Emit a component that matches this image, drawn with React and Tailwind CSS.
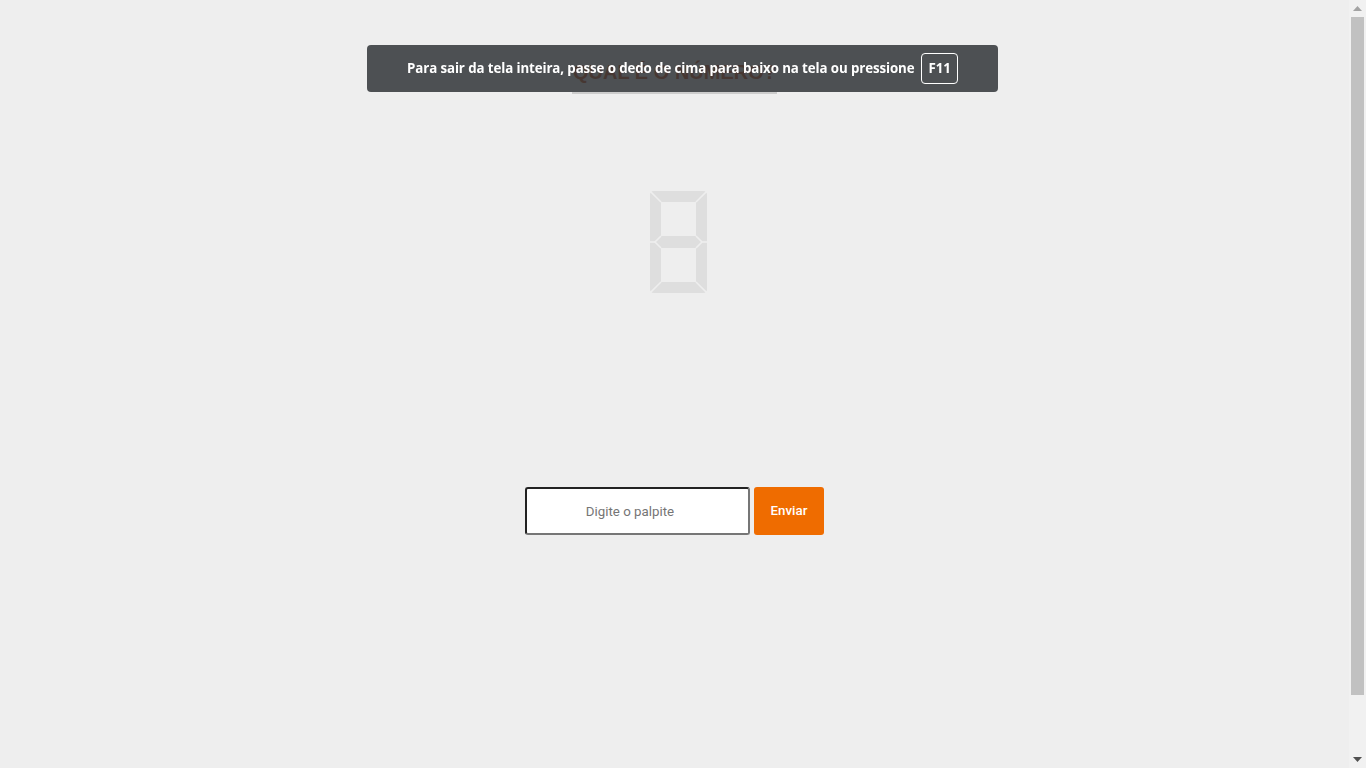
import React from 'react';

function Digit() {
        const bg = '#eeeeee';
        return (
                <svg width="57" height="102" viewBox="0 0 57 102" className="block">
                        <rect x="0" y="0" width="57" height="102" rx="4" fill="#dedede" />
                        <rect x="11" y="11" width="35" height="34" fill={bg} />
                        <rect x="11" y="57" width="35" height="34" fill={bg} />
                        <g stroke={bg} strokeWidth="1.6" fill="none">
                                <line x1="0.5" y1="0.5" x2="11" y2="11" />
                                <line x1="56.5" y1="0.5" x2="46" y2="11" />
                                <line x1="0.5" y1="101.5" x2="11" y2="91" />
                                <line x1="56.5" y1="101.5" x2="46" y2="91" />
                                <polyline points="11,45 5,51 11,57" />
                                <polyline points="46,45 52,51 46,57" />
                                <line x1="0" y1="51" x2="5" y2="51" />
                                <line x1="52" y1="51" x2="57" y2="51" />
                        </g>
                </svg>
        );
}

function Scrollbar() {
        return (
                <div className="w-[17px] h-full bg-[#f1f1f1] flex flex-col items-center">
                        <div className="h-[17px] flex items-center justify-center">
                                <svg width="9" height="5" viewBox="0 0 9 5"><path d="M0 5 L4.5 0 L9 5 Z" fill="#a3a3a3" /></svg>
                        </div>
                        <div className="w-[13px] h-[678px] bg-[#c1c1c1]" />
                        <div className="flex-1" />
                        <div className="h-[17px] flex items-center justify-center">
                                <svg width="9" height="5" viewBox="0 0 9 5"><path d="M0 0 L9 0 L4.5 5 Z" fill="#505050" /></svg>
                        </div>
                </div>
        );
}

export default function App() {
        return (
                <div className="h-screen overflow-hidden bg-[#eeeeee] flex" style={{ fontFamily: 'Roboto, "Liberation Sans", Arial, sans-serif' }}>
                        <div className="flex-1 flex flex-col items-center">
                                <div className="pt-[58px]">
                                        <h1 className="px-[1px] pb-[6px] border-b-2 border-[#cccccc] text-[20px] leading-[28px] font-bold text-[#c0440a]" style={{ fontFamily: '"Liberation Sans", Arial, sans-serif' }}>
                                                QUAL É O NÚMERO?
                                        </h1>
                                </div>

                                <div className="mt-[97px] ml-[8px]">
                                        <Digit />
                                </div>

                                <form className="mt-[194px] flex gap-[4px]" onSubmit={(e) => e.preventDefault()}>
                                        <input
                                                type="text"
                                                placeholder="Digite o palpite"
                                                className="w-[225px] h-[48px] pr-[15px] bg-white rounded-[3px] border-2 border-t-[#222222] border-l-[#222222] border-r-[#767676] border-b-[#767676] text-center text-[13.3px] text-[#333] placeholder:text-[#757575] outline-none"
                                        />
                                        <button type="submit" className="w-[70px] h-[48px] rounded-[3px] bg-[#ef6c00] text-white text-[13.3px] font-medium">
                                                Enviar
                                        </button>
                                </form>
                        </div>

                        <Scrollbar />

                        <div className="fixed top-[45px] left-[367px] w-[631px] h-[47px] rounded-[4px] bg-[rgba(50,54,57,0.86)] flex items-center justify-center gap-[7px]" style={{ fontFamily: '"Open Sans", "Noto Sans", sans-serif' }}>
                                <span className="text-white text-[13.3px] font-bold tracking-[-0.1px]">
                                        Para sair da tela inteira, passe o dedo de cima para baixo na tela ou pressione
                                </span>
                                <span className="h-[31px] px-[6px] flex items-center border border-white rounded-[4px] text-white text-[13.3px] font-bold">
                                        F11
                                </span>
                        </div>
                </div>
        );
}
